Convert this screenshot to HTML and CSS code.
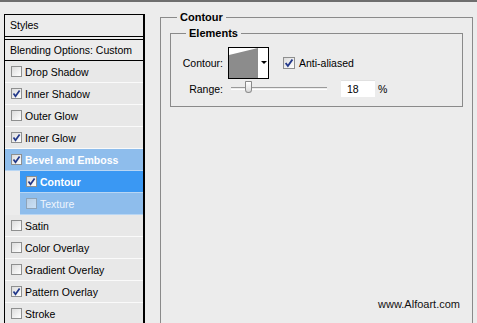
FILE: index.html
```html
<!DOCTYPE html>
<html lang="en">

<head>
    <meta charset="UTF-8">
    <meta name="viewport" content="width=device-width, initial-scale=1.0">
    <title>Layer Style - Contour</title>
    <link rel="stylesheet" href="styles.css">
</head>

<body>
    <div class="dialog">
        <div class="styles-panel">
            <div class="panel-title">Styles</div>
            <div class="panel-blend">Blending Options: Custom</div>
            <ul class="style-list">
                <li class="style-row"><span class="check"></span>Drop Shadow</li>
                <li class="style-row"><span class="check checked"><svg viewBox="0 0 9 9"><polyline points="1.5,4.5 3.5,7.2 7.6,1.4"/></svg></span>Inner Shadow</li>
                <li class="style-row"><span class="check"></span>Outer Glow</li>
                <li class="style-row"><span class="check checked"><svg viewBox="0 0 9 9"><polyline points="1.5,4.5 3.5,7.2 7.6,1.4"/></svg></span>Inner Glow</li>
                <li class="style-row active bold"><span class="check checked"><svg viewBox="0 0 9 9"><polyline points="1.5,4.5 3.5,7.2 7.6,1.4"/></svg></span>Bevel and Emboss</li>
                <li class="style-row sub selected bold"><span class="check checked"><svg viewBox="0 0 9 9"><polyline points="1.5,4.5 3.5,7.2 7.6,1.4"/></svg></span>Contour</li>
                <li class="style-row sub active faded"><span class="check"></span>Texture</li>
                <li class="style-row"><span class="check"></span>Satin</li>
                <li class="style-row"><span class="check"></span>Color Overlay</li>
                <li class="style-row"><span class="check"></span>Gradient Overlay</li>
                <li class="style-row"><span class="check checked"><svg viewBox="0 0 9 9"><polyline points="1.5,4.5 3.5,7.2 7.6,1.4"/></svg></span>Pattern Overlay</li>
                <li class="style-row"><span class="check"></span>Stroke</li>
            </ul>
        </div>

        <div class="options">
            <fieldset class="group outer">
                <legend>Contour</legend>
                <fieldset class="group inner">
                    <legend>Elements</legend>
                    <div class="field-row contour-row">
                        <span class="field-label">Contour:</span>
                        <div class="contour-picker">
                            <svg class="curve" viewBox="0 0 29 30"><polygon points="0,7 29,0 29,30 0,30"/></svg>
                            <span class="picker-arrow"></span>
                        </div>
                        <span class="check big checked"><svg viewBox="0 0 9 9"><polyline points="1.5,4.5 3.5,7.2 7.6,1.4"/></svg></span>
                        <span class="check-label">Anti-aliased</span>
                    </div>
                    <div class="field-row range-row">
                        <span class="field-label">Range:</span>
                        <div class="slider">
                            <span class="slider-thumb"></span>
                        </div>
                        <input class="num-input" type="text" value="18">
                        <span class="unit">%</span>
                    </div>
                </fieldset>
                <div class="credit">www.Alfoart.com</div>
            </fieldset>
        </div>
    </div>
</body>

</html>
```

FILE: styles.css
```css
body {
    margin: 0;
    height: 321px;
    overflow: hidden;
    background-color: #ECECEC;
    border-top: 2px solid #6E6E6E;
    font-family: "Liberation Sans", Arial, sans-serif;
    font-size: 10.5px;
    color: #000;
}

.dialog {
    display: flex;
    height: 380px;
}

/* left list of styles */

.styles-panel {
    flex: none;
    width: 138px;
    margin: 12px 0 0 4px;
    border: 1px solid #000;
    border-right-width: 2px;
    background-color: #ECECEC;
}

.panel-title {
    height: 21px;
    line-height: 21px;
    padding-left: 5px;
    border-bottom: 1px solid #000;
}

.panel-blend {
    height: 20px;
    line-height: 20px;
    margin-top: 2px;
    padding-left: 5px;
    border-top: 1px solid #000;
    border-bottom: 1px solid #000;
}

.style-list {
    list-style: none;
    margin: 0;
    padding: 0;
}

.style-row {
    display: flex;
    align-items: center;
    gap: 3px;
    height: 21px;
    padding-left: 6px;
    background-color: #E8E8E8;
    border-bottom: 1px solid #FAFAFA;
}

.style-row.sub {
    margin-left: 15px;
}

.style-row.active {
    background-color: #8EBDEC;
    color: #FFFFFF;
    border-bottom-color: #B8D6F4;
}

.style-row.selected {
    background-color: #3A98F3;
    color: #FFFFFF;
    border-bottom-color: #B8D6F4;
}

.style-row.bold {
    font-weight: bold;
}

.style-row.faded {
    color: #EEF5FD;
}

.style-row.faded .check {
    opacity: 0.55;
}

.check {
    flex: none;
    display: flex;
    width: 11px;
    height: 11px;
    box-sizing: border-box;
    border: 1px solid #8E8F8F;
    background: linear-gradient(135deg, #DCDCDC, #FFFFFF);
}

.check.big {
    width: 12px;
    height: 12px;
}

.check svg {
    width: 100%;
    height: 100%;
}

.check polyline {
    fill: none;
    stroke: #22388A;
    stroke-width: 1.7;
}

/* right options */

.options {
    flex: none;
    padding: 9px 0 0 15px;
}

.group {
    margin: 0;
    min-width: 0;
    box-sizing: border-box;
    border: 1px solid #8A8A8A;
}

.group legend {
    margin-left: 7px;
    padding: 0 3px;
    font-size: 11px;
    line-height: 13px;
    font-weight: bold;
}

.group.outer {
    width: 313px;
    height: 420px;
    padding: 3px 9px 0;
}

.group.inner {
    padding: 0 9px 9px 8px;
}

.field-row {
    display: flex;
    align-items: center;
}

.contour-row {
    height: 32px;
    margin-top: 7px;
}

.range-row {
    height: 17px;
    margin-top: 1px;
}

.field-label {
    width: 44px;
    text-align: right;
}

.contour-picker {
    display: flex;
    width: 41px;
    height: 32px;
    margin-left: 5px;
    box-sizing: border-box;
    border: 1px solid #000;
    background-color: #FFFFFF;
}

.curve {
    width: 29px;
    height: 30px;
}

.curve polygon {
    fill: #8C8C8C;
}

.picker-arrow {
    width: 0;
    height: 0;
    margin: 13px 0 0 3px;
    border-left: 3px solid transparent;
    border-right: 3px solid transparent;
    border-top: 3px solid #000;
}

.contour-row .check {
    margin-left: 14px;
}

.check-label {
    margin-left: 4px;
}

.slider {
    position: relative;
    width: 96px;
    height: 1px;
    margin-left: 8px;
    border-top: 1px solid #9A9A9A;
    border-bottom: 1px solid #FFFFFF;
}

.slider-thumb {
    position: absolute;
    left: 14px;
    top: -7px;
    width: 5px;
    height: 10px;
    border: 1px solid #8A8A8A;
    border-radius: 1px 1px 4px 4px;
    background: linear-gradient(#FFFFFF, #DADADA);
}

.num-input {
    width: 34px;
    height: 17px;
    margin-left: 14px;
    padding: 0 0 0 6px;
    box-sizing: border-box;
    border: none;
    border-top: 1px solid #E0E0E0;
    background-color: #FFFFFF;
    font-family: inherit;
    font-size: 10.5px;
    color: #000;
}

.unit {
    margin-left: 3px;
}

.credit {
    margin-top: 191px;
    padding-right: 3px;
    text-align: right;
    font-size: 11px;
    color: #111;
}
```
